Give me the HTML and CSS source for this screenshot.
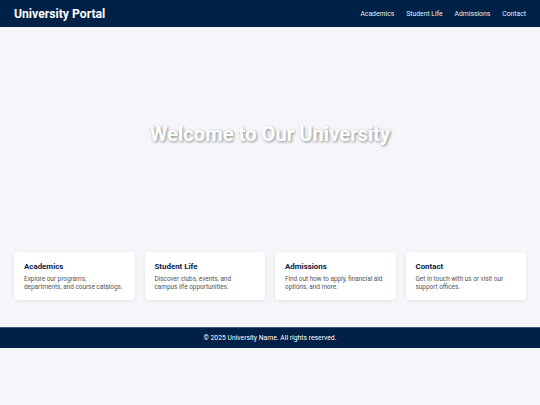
FILE: index.html
```html
<!DOCTYPE html>
<html lang="en">
<head>
<meta charset="utf-8">
<title>University Portal</title>
<link rel="stylesheet" href="styles.css">
</head>
<body>
<header class="site-header">
  <div class="brand">University Portal</div>
  <nav class="nav">
    <a href="#">Academics</a>
    <a href="#">Student Life</a>
    <a href="#">Admissions</a>
    <a href="#">Contact</a>
  </nav>
</header>
<section class="hero">
  <h1>Welcome to Our University</h1>
</section>
<section class="cards">
  <div class="card">
    <h2>Academics</h2>
    <p>Explore our programs, departments, and course catalogs.</p>
  </div>
  <div class="card">
    <h2>Student Life</h2>
    <p>Discover clubs, events, and campus life opportunities.</p>
  </div>
  <div class="card">
    <h2>Admissions</h2>
    <p>Find out how to apply, financial aid options, and more.</p>
  </div>
  <div class="card">
    <h2>Contact</h2>
    <p>Get in touch with us or visit our support offices.</p>
  </div>
</section>
<footer class="site-footer">&copy; 2025 University Name. All rights reserved.</footer>
</body>
</html>
```
FILE: styles.css
```css
* { box-sizing: border-box; }
html, body { margin: 0; padding: 0; }
body {
  background: #f4f6fa;
  font-family: Roboto, "Liberation Sans", Arial, sans-serif;
  color: #333;
}
.site-header {
  height: 27px;
  background: #002147;
  display: flex;
  align-items: center;
  justify-content: space-between;
  padding: 0 14px;
}
.brand {
  color: #fff;
  font-weight: 700;
  font-size: 12.2px;
}
.nav { display: flex; gap: 12px; }
.nav a {
  color: #e8ecf2;
  text-decoration: none;
  font-size: 6.8px;
}
.hero {
  height: 213px;
  display: flex;
  align-items: center;
  justify-content: center;
}
.hero h1 {
  margin: 0;
  color: #fff;
  font-size: 20.2px;
  font-weight: 700;
  text-shadow: 1px 1px 3px rgba(0,0,0,0.45);
}
.cards {
  display: grid;
  grid-template-columns: repeat(4, 1fr);
  gap: 10px;
  padding: 12px 14px 27px;
}
.card {
  background: #fff;
  border-radius: 4px;
  box-shadow: 0 1px 4px rgba(0,0,0,0.08);
  padding: 10px 10px;
  height: 48px;
}
.card h2 {
  margin: 0 0 4px;
  font-size: 7.9px;
  font-weight: 700;
  color: #0b2145;
}
.card p {
  margin: 0;
  font-size: 6.4px;
  line-height: 1.3;
  color: #555;
}
.site-footer {
  background: #002147;
  color: #fff;
  text-align: center;
  font-size: 6.8px;
  height: 21px;
  line-height: 20px;
  border-top: 1px solid #3d5577;
}
```
